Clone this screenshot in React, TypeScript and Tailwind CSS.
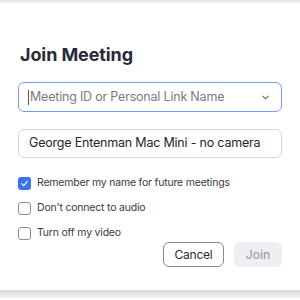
import { ChevronDown } from 'lucide-react';

function Check({ checked, label }: { checked?: boolean; label: string }) {
  return (
    <label className="flex items-center gap-[6px] h-[13px]">
      {checked ? (
        <span className="w-[13px] h-[13px] rounded-[3px] bg-[#3b73ea] flex items-center justify-center">
          <svg width="9" height="9" viewBox="0 0 10 10" fill="none">
            <path d="M2 5.2 L4.2 7.4 L8.2 2.6" stroke="#fff" strokeWidth="1.3" strokeLinecap="round" strokeLinejoin="round" />
          </svg>
        </span>
      ) : (
        <span className="w-[13px] h-[13px] rounded-[3px] border border-[#8e8e93] bg-white" />
      )}
      <span className="text-[10.5px] tracking-[-0.2px] text-[#3a3a40] leading-none whitespace-nowrap">{label}</span>
    </label>
  );
}

export default function App() {
  return (
    <div className="w-[300px] h-[300px] bg-white flex flex-col font-['Inter',sans-serif] overflow-hidden">
      {/* window chrome edge */}
      <div className="h-[3px] bg-gradient-to-b from-[#e2e2e2] to-[#f3f3f3]" />

      <div className="flex-1 px-[18px]">
        <h1 className="mt-[41px] ml-[2px] text-[18px] font-bold text-[#2a2a38] leading-[22px] tracking-[-0.1px]">
          Join Meeting
        </h1>

        {/* meeting id */}
        <div className="mt-[16px] h-[30px] rounded-[6px] border border-[#7b9bf2] flex items-center pl-[9px] pr-[10px]">
          <span className="w-px h-[15px] bg-[#555]" />
          <span className="text-[12.5px] tracking-[-0.2px] text-[#7a7a80] ml-[1px] flex-1 whitespace-nowrap">
            Meeting ID or Personal Link Name
          </span>
          <ChevronDown size={11} strokeWidth={2.2} className="text-[#666]" />
        </div>

        {/* name */}
        <div className="mt-[17px] h-[29px] rounded-[6px] border border-[#d4d4dc] flex items-center pl-[10px]">
          <span className="text-[12.5px] tracking-[-0.2px] text-[#26262c] whitespace-nowrap">
            George Entenman Mac Mini - no camera
          </span>
        </div>

        <div className="mt-[19px] flex flex-col gap-[12px]">
          <Check checked label="Remember my name for future meetings" />
          <Check label="Don't connect to audio" />
          <Check label="Turn off my video" />
        </div>

        <div className="mt-[2px] flex justify-end gap-[10px]">
          <button className="w-[61px] h-[25px] rounded-[6px] border border-[#8a8a8e] text-[12px] tracking-[-0.2px] text-[#2a2a30] bg-white">
            Cancel
          </button>
          <button className="w-[48px] h-[25px] rounded-[6px] bg-[#efeef3] text-[12px] text-[#a0a0a6] font-medium">
            Join
          </button>
        </div>
      </div>

      {/* window bottom shadow */}
      <div className="h-[8px] bg-gradient-to-b from-[#d9d9d9] to-[#f4f4f4]" />
      <div className="h-[2px] bg-white" />
    </div>
  );
}
